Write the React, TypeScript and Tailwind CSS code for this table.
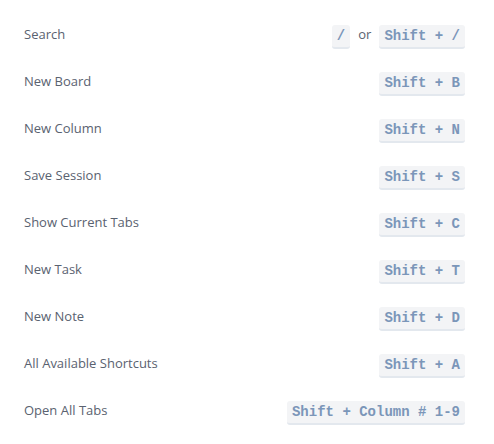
const ROWS: { label: string; keys: string[] }[] = [
  { label: 'Search', keys: ['/', 'Shift + /'] },
  { label: 'New Board', keys: ['Shift + B'] },
  { label: 'New Column', keys: ['Shift + N'] },
  { label: 'Save Session', keys: ['Shift + S'] },
  { label: 'Show Current Tabs', keys: ['Shift + C'] },
  { label: 'New Task', keys: ['Shift + T'] },
  { label: 'New Note', keys: ['Shift + D'] },
  { label: 'All Available Shortcuts', keys: ['Shift + A'] },
  { label: 'Open All Tabs', keys: ['Shift + Column # 1-9'] },
]

function Kbd({ children }: { children: string }) {
  return (
    <kbd className="inline-block h-6 px-[5px] rounded-[3px] bg-[#f3f4f6] border-b-2 border-[#e3e8ee] font-['Liberation_Mono',monospace] font-bold text-[14px] leading-[22px] text-[#7b96b9] whitespace-pre">
      {children}
    </kbd>
  )
}

export default function App() {
  return (
    <div className="w-[494px] h-[444px] bg-white pt-[23px] pl-6 pr-[29px] font-['Open_Sans',sans-serif]">
      {ROWS.map(r => (
        <div key={r.label} className="flex items-center justify-between h-[47px] pb-[23px]">
          <span className="text-[13px] text-[#5a6270]">{r.label}</span>
          <div className="flex items-center gap-2 mt-[3px]">
            {r.keys.map((k, i) => (
              <span key={k} className="flex items-center gap-2">
                {i > 0 && <span className="text-[13px] text-[#5a6270] -mt-[3px]">or</span>}
                <Kbd>{k}</Kbd>
              </span>
            ))}
          </div>
        </div>
      ))}
    </div>
  )
}
